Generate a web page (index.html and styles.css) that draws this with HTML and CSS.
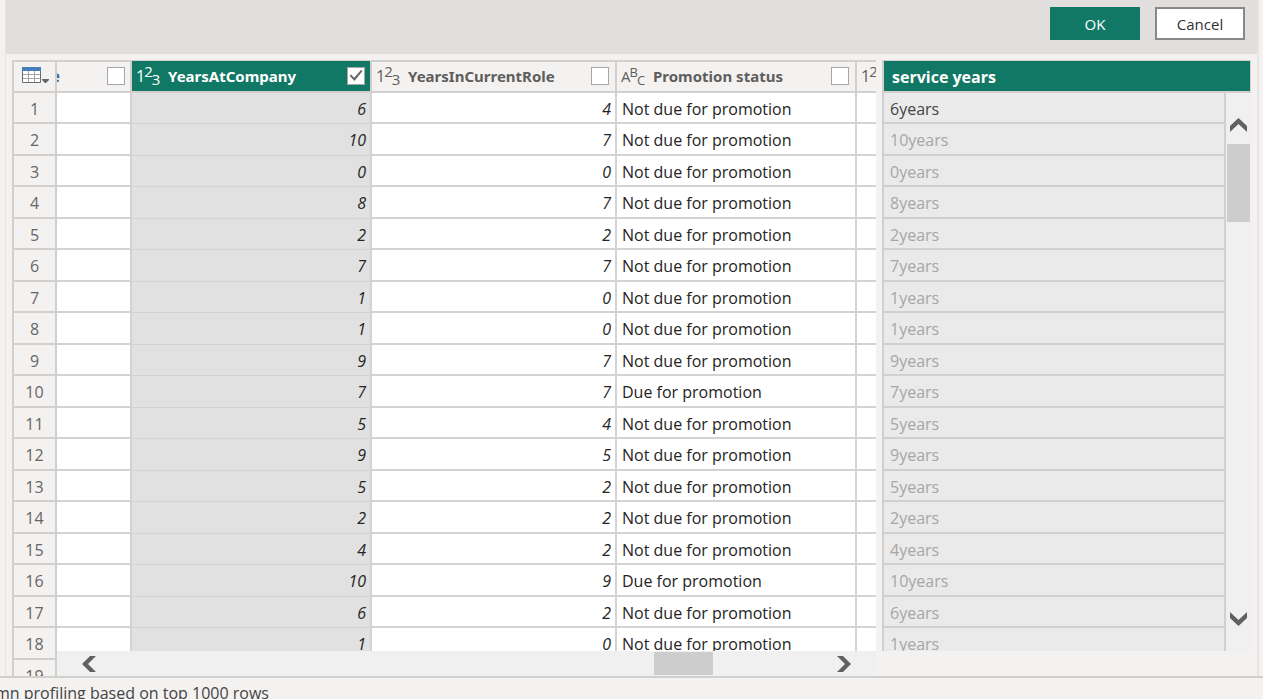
FILE: index.html
```html
<!DOCTYPE html>
<html lang="en">
<head>
<meta charset="utf-8">
<title>Column From Examples</title>
<link rel="stylesheet" href="styles.css">
</head>
<body>
<main class="editor">
  <header class="actions">
    <button class="btn btn-primary" type="button">OK</button>
    <button class="btn" type="button">Cancel</button>
  </header>
  <div class="workspace">
    <table class="grid row-numbers">
      <thead><tr><th><button class="table-menu" type="button" aria-label="Table options"><svg width="28" height="18" viewBox="0 0 28 18"><path fill="#fff" d="M0 1h19v15H0z"/><path fill="#4a7ebb" d="M0 0h19v4H0z"/><path fill="none" stroke="#a6a6a6" d="M1 7.500h17M1 11.500h17M6.500 4v11M12.500 4v11"/><path fill="none" stroke="#6b6b6b" d="M.5 4v11.500h18V4"/><path fill="#666" d="M20 12h7v1l-3 3h-1l-3-3z"/></svg></button></th></tr></thead>
      <tbody>
        <tr><td>1</td></tr><tr><td>2</td></tr><tr><td>3</td></tr><tr><td>4</td></tr><tr><td>5</td></tr>
        <tr><td>6</td></tr><tr><td>7</td></tr><tr><td>8</td></tr><tr><td>9</td></tr><tr><td>10</td></tr>
        <tr><td>11</td></tr><tr><td>12</td></tr><tr><td>13</td></tr><tr><td>14</td></tr><tr><td>15</td></tr>
        <tr><td>16</td></tr><tr><td>17</td></tr><tr><td>18</td></tr><tr><td>19</td></tr>
      </tbody>
    </table>
    <section class="data-pane">
      <div class="viewport">
        <table class="grid data">
          <colgroup><col class="c-prev"><col class="c-company"><col class="c-role"><col class="c-status"><col class="c-next"></colgroup>
          <thead>
            <tr>
              <th><div class="head head-cut"><span class="cut-name">e</span><input type="checkbox" class="tick" aria-label="Previous column"></div></th>
              <th class="selected"><div class="head"><span class="type">1<span class="up">2</span><span class="down">3</span></span><label for="k1" class="name">YearsAtCompany</label><input type="checkbox" class="tick" id="k1" checked></div></th>
              <th><div class="head head-wide"><span class="type">1<span class="up">2</span><span class="down">3</span></span><label for="k2" class="name">YearsInCurrentRole</label><input type="checkbox" class="tick" id="k2"></div></th>
              <th><div class="head head-wide"><span class="type type-text">A<span class="up">B</span><span class="down">C</span></span><label for="k3" class="name">Promotion status</label><input type="checkbox" class="tick" id="k3"></div></th>
              <th><div class="head"><span class="type">1<span class="up">2</span></span></div></th>
            </tr>
          </thead>
          <tbody>
            <tr><td></td><td>6</td><td>4</td><td>Not due for promotion</td><td></td></tr>
            <tr><td></td><td>10</td><td>7</td><td>Not due for promotion</td><td></td></tr>
            <tr><td></td><td>0</td><td>0</td><td>Not due for promotion</td><td></td></tr>
            <tr><td></td><td>8</td><td>7</td><td>Not due for promotion</td><td></td></tr>
            <tr><td></td><td>2</td><td>2</td><td>Not due for promotion</td><td></td></tr>
            <tr><td></td><td>7</td><td>7</td><td>Not due for promotion</td><td></td></tr>
            <tr><td></td><td>1</td><td>0</td><td>Not due for promotion</td><td></td></tr>
            <tr><td></td><td>1</td><td>0</td><td>Not due for promotion</td><td></td></tr>
            <tr><td></td><td>9</td><td>7</td><td>Not due for promotion</td><td></td></tr>
            <tr><td></td><td>7</td><td>7</td><td>Due for promotion</td><td></td></tr>
            <tr><td></td><td>5</td><td>4</td><td>Not due for promotion</td><td></td></tr>
            <tr><td></td><td>9</td><td>5</td><td>Not due for promotion</td><td></td></tr>
            <tr><td></td><td>5</td><td>2</td><td>Not due for promotion</td><td></td></tr>
            <tr><td></td><td>2</td><td>2</td><td>Not due for promotion</td><td></td></tr>
            <tr><td></td><td>4</td><td>2</td><td>Not due for promotion</td><td></td></tr>
            <tr><td></td><td>10</td><td>9</td><td>Due for promotion</td><td></td></tr>
            <tr><td></td><td>6</td><td>2</td><td>Not due for promotion</td><td></td></tr>
            <tr><td></td><td>1</td><td>0</td><td>Not due for promotion</td><td></td></tr>
          </tbody>
        </table>
      </div>
      <div class="hbar">
        <button class="arrow" type="button" aria-label="Scroll left"><svg width="14" height="18" viewBox="0 0 14 18"><path fill="#606060" d="M8 1h6L6 9l8 8H8L0 9z"/></svg></button>
        <div class="htrack"><div class="hthumb"></div></div>
        <button class="arrow" type="button" aria-label="Scroll right"><svg width="14" height="18" viewBox="0 0 14 18"><path fill="#606060" d="M6 1H0l8 8-8 8h6l8-8z"/></svg></button>
      </div>
    </section>
    <section class="result-pane">
      <h2 class="result-title">service years</h2>
      <div class="result-body">
        <table class="grid result">
          <tbody>
            <tr><td class="given">6years</td></tr><tr><td>10years</td></tr><tr><td>0years</td></tr>
            <tr><td>8years</td></tr><tr><td>2years</td></tr><tr><td>7years</td></tr>
            <tr><td>1years</td></tr><tr><td>1years</td></tr><tr><td>9years</td></tr>
            <tr><td>7years</td></tr><tr><td>5years</td></tr><tr><td>9years</td></tr>
            <tr><td>5years</td></tr><tr><td>2years</td></tr><tr><td>4years</td></tr>
            <tr><td>10years</td></tr><tr><td>6years</td></tr><tr><td>1years</td></tr>
          </tbody>
        </table>
        <div class="vbar">
          <button class="arrow" type="button" aria-label="Scroll up"><svg width="18" height="14" viewBox="0 0 18 14"><path fill="#606060" d="M0 8v6l8.500-8 8.500 8V8L8.500 0z"/></svg></button>
          <div class="vtrack"><div class="vthumb"></div></div>
          <button class="arrow" type="button" aria-label="Scroll down"><svg width="18" height="14" viewBox="0 0 18 14"><path fill="#606060" d="M0 6V0l8.500 8L17 0v6l-8.500 8z"/></svg></button>
        </div>
      </div>
    </section>
  </div>
</main>
<footer class="status">mn profiling based on top 1000 rows</footer>
</body>
</html>
```

FILE: styles.css
```css
* { box-sizing: border-box; }

body {
  margin: 0;
  height: 100vh;
  overflow: hidden;
  display: flex;
  flex-direction: column;
  background: #f3f2f1;
  color: #252423;
  font: 16px/20px "Open Sans", "Noto Sans", sans-serif;
}

button { font: inherit; cursor: pointer; }

.editor {
  flex: 1;
  min-height: 0;
  margin: 0 4px 0 5px;
  border: solid #e6e5e4;
  border-width: 0 2px 0 1px;
  display: flex;
  flex-direction: column;
  overflow: hidden;
}

.actions {
  flex: none;
  display: flex;
  justify-content: flex-end;
  gap: 15px;
  padding: 7px 12px 14px;
  background: #e0dfdd;
}

.btn {
  width: 90px;
  height: 33px;
  padding: 0;
  border: 2px solid #8a8886;
  background: #fff;
  color: #323130;
  font-size: 15px;
}

.btn-primary {
  border-color: #117865;
  background: #117865;
  color: #fff;
}

.workspace {
  flex: 1;
  min-height: 0;
  display: flex;
  align-items: flex-start;
  overflow: hidden;
  padding: 6px 6px 0;
}

.grid {
  border-collapse: separate;
  border-spacing: 0;
  table-layout: fixed;
}

.grid th,
.grid td {
  padding: 0;
  border: solid #d2d0ce;
  border-width: 0 2px 2px 0;
}

.grid th {
  height: 33px;
  padding-bottom: 1px;
  border-top-width: 2px;
  background: #f3f2f1;
  color: #605e5c;
  text-align: left;
}

.grid td { height: 31px; padding-top: 2px; }
.grid tbody tr:nth-child(even) td { height: 32px; }

.row-numbers {
  flex: none;
  width: 45px;
  border-left: 2px solid #d2d0ce;
  color: #666;
  text-align: center;
}

.table-menu {
  display: block;
  width: 100%;
  padding: 0 0 0 8px;
  border: 0;
  background: none;
  text-align: left;
}

.table-menu svg { display: block; }

.data-pane {
  flex: 1;
  min-width: 0;
  height: 100%;
  display: flex;
  flex-direction: column;
}

.viewport {
  flex: 1;
  min-height: 0;
  overflow: hidden;
}

.data { width: 875px; }
.c-prev { width: 75px; }
.c-company { width: 240px; }
.c-role { width: 245px; }
.c-status { width: 240px; }
.c-next { width: 75px; }

.data td { background: #fff; border-color: #d3d3d3; }

.data td:nth-child(2),
.data td:nth-child(3) {
  padding-right: 4px;
  font-style: italic;
  text-align: right;
}

.data td:nth-child(2) {
  padding-bottom: 1px;
  background: #e1e1e1;
  border-bottom-width: 1px;
}

.data td:nth-child(4) { padding-left: 5px; }

.data .selected {
  border-top: 1px solid #d2d0ce;
  background: #117865;
  color: #fff;
}

.head {
  height: 20px;
  display: flex;
  align-items: center;
  padding: 0 5px 0 4px;
}

.head-cut { padding-left: 0; }
.head-wide { padding-right: 6px; }

.cut-name {
  width: 3px;
  overflow: hidden;
  display: flex;
  justify-content: flex-end;
  color: #4a6a94;
}

.type {
  width: 32px;
  flex: none;
  font-weight: 400;
}

.up, .down { margin-left: -1px; font-size: 15px; line-height: 1px; }
.up { vertical-align: 5px; }
.down { vertical-align: -3px; }
.type-text { font-size: 15px; }
.type-text .up, .type-text .down { font-size: 13px; }

.name {
  font-family: "Noto Sans", "Open Sans", sans-serif;
  font-size: 15px;
  font-weight: 700;
  white-space: nowrap;
}

.tick {
  appearance: none;
  flex: none;
  width: 18px;
  height: 18px;
  margin: 0 0 0 auto;
  border: 1px solid #a6a6a6;
  background: #fff;
  display: grid;
  place-items: center;
}

.tick:checked::before {
  content: "";
  width: 13px;
  height: 11px;
  background: #666;
  clip-path: polygon(0 50%, 12% 40%, 36% 70%, 88% 0, 100% 10%, 38% 100%);
}

.hbar {
  flex: none;
  height: 25px;
  display: flex;
  align-items: center;
  padding: 0 25px;
  background: #f0f0f0;
}

.arrow {
  flex: none;
  display: block;
  padding: 0;
  border: 0;
  background: none;
}

.arrow svg { display: block; }
.htrack { flex: 1; padding: 0 10px; }

.hthumb {
  width: 59px;
  height: 23px;
  margin-left: 76%;
  background: #cdcdcd;
}

.result-pane {
  flex: none;
  width: 369px;
  height: calc(100% - 25px);
  margin-left: 6px;
  display: flex;
  flex-direction: column;
  overflow: hidden;
  border-left: 2px solid #d2d0ce;
}

.result-title {
  flex: none;
  height: 33px;
  margin: 0;
  padding: 6px 8px 4px;
  border: solid #d2d0ce;
  border-width: 1px 1px 2px 0;
  background: #117865;
  color: #fff;
  font-size: 16px;
  line-height: 20px;
}

.result-body {
  flex: 1;
  min-height: 0;
  display: flex;
  align-items: flex-start;
}

.result {
  flex: 1;
  background: #eaeaea;
  color: #a6a6a6;
}

.result td { padding-left: 6px; }
.result .given { color: #444; }

.vbar {
  width: 25px;
  height: 100%;
  display: flex;
  flex-direction: column;
  align-items: center;
  padding: 25px 0;
  background: #f0f0f0;
}

.vtrack { flex: 1; padding: 12px 0; }

.vthumb {
  width: 23px;
  height: 78px;
  background: #cdcdcd;
}

.status {
  flex: none;
  height: 23px;
  padding-top: 5px;
  border-top: 2px solid #d2d0ce;
  overflow: hidden;
  white-space: nowrap;
  text-indent: -5px;
  color: #444;
}
```
